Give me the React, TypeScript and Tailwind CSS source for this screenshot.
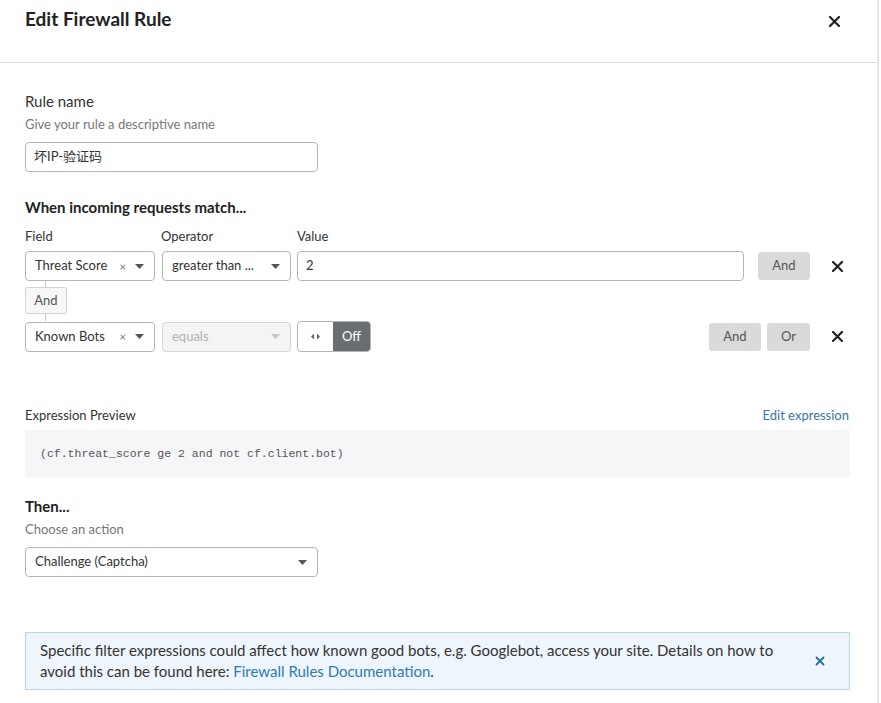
import { X } from "lucide-react";

const font = { fontFamily: '"Lato", "Noto Sans CJK SC", sans-serif' };

const Caret = ({ light }: { light?: boolean }) => (
  <svg width="9" height="5" viewBox="0 0 9 5" className="shrink-0">
    <path d="M0 0h9L4.5 5z" fill={light ? "#c4c4c4" : "#555"} />
  </svg>
);

const Select = ({
  label,
  clear,
  disabled,
  className = "",
}: {
  label: string;
  clear?: boolean;
  disabled?: boolean;
  className?: string;
}) => (
  <div
    className={`flex items-center h-[30px] rounded-[4px] border pl-[9px] pr-[10px] ${
      disabled ? "bg-[#f4f4f4] border-[#d6d6d6] text-[#b0b0b0]" : "bg-white border-[#b5b5b5] text-[#333]"
    } ${className}`}
  >
    <span className="flex-1 truncate text-[13px]">{label}</span>
    {clear && <span className="text-[11px] text-[#777] mr-[9px] leading-none">×</span>}
    <Caret light={disabled} />
  </div>
);

const GrayBtn = ({ children, className = "" }: { children: React.ReactNode; className?: string }) => (
  <button className={`h-[28px] rounded-[3px] bg-[#dadada] text-[13px] text-[#555] ${className}`}>{children}</button>
);

const BoldX = () => (
  <svg width="11" height="11" viewBox="0 0 11 11">
    <path d="M1 1l9 9M10 1l-9 9" stroke="#222" strokeWidth="2.2" strokeLinecap="square" />
  </svg>
);

export default function App() {
  return (
    <div className="w-[879px] min-h-[703px] bg-white border-r-2 border-[#e6e6e6] text-[#333]" style={font}>
      <div className="h-[63px] border-b border-[#dedede] flex justify-between items-start pl-[25px] pr-[37px] pt-[5px]">
        <h1 className="text-[19px] font-bold text-[#222]">Edit Firewall Rule</h1>
        <div className="mt-[11px]">
          <BoldX />
        </div>
      </div>

      <div className="px-[25px] pt-[28px]">
        <div className="text-[15px] leading-[20px]">Rule name</div>
        <div className="text-[13px] leading-[18px] text-[#777] mt-[4px]">Give your rule a descriptive name</div>
        <div className="mt-[9px] w-[293px] h-[30px] rounded-[4px] border border-[#b5b5b5] flex items-center px-[8px] text-[13px]">
          坏IP-验证码
        </div>

        <div className="text-[15px] font-bold mt-[25px] leading-[20px] text-[#222]">When incoming requests match...</div>
        <div className="flex text-[13px] mt-[10px] leading-[18px]">
          <span className="w-[136px]">Field</span>
          <span className="w-[136px]">Operator</span>
          <span>Value</span>
        </div>

        <div className="flex items-center mt-[6px]">
          <Select label="Threat Score" clear className="w-[130px]" />
          <Select label="greater than ..." className="w-[129px] ml-[7px]" />
          <div className="ml-[6px] w-[447px] h-[30px] rounded-[4px] border border-[#b5b5b5] flex items-center px-[8px] text-[13px]">
            2
          </div>
          <GrayBtn className="w-[52px] ml-[14px]">And</GrayBtn>
          <div className="ml-[22px]">
            <BoldX />
          </div>
        </div>

        <div className="flex flex-col items-start">
          <div className="w-px h-[6px] bg-[#c8c8c8] ml-[20px]" />
          <div className="h-[27px] w-[42px] border border-[#d4d4d4] rounded-[2px] bg-[#f7f7f7] text-[13px] text-[#555] flex items-center justify-center">
            And
          </div>
          <div className="w-px h-[7px] bg-[#c8c8c8] ml-[20px]" />
        </div>

        <div className="flex items-center">
          <Select label="Known Bots" clear className="w-[130px]" />
          <Select label="equals" disabled className="w-[129px] ml-[7px]" />
          <div className="ml-[6px] flex h-[31px] w-[74px] rounded-[4px] border border-[#b5b5b5] overflow-hidden">
            <div className="w-[35px] flex items-center justify-center text-[#666]">
              <svg width="9" height="7" viewBox="0 0 9 7">
                <path d="M3 0.5L0 3.5 3 6.5zM6 0.5L9 3.5 6 6.5z" fill="#666" />
              </svg>
            </div>
            <div className="flex-1 bg-[#6b6e71] text-white text-[13px] flex items-center justify-center">Off</div>
          </div>
          <div className="flex-1" />
          <GrayBtn className="w-[52px]">And</GrayBtn>
          <GrayBtn className="w-[43px] ml-[6px]">Or</GrayBtn>
          <div className="ml-[22px] mr-[9px]">
            <BoldX />
          </div>
        </div>

        <div className="flex justify-between items-end mt-[54px] text-[13px] leading-[18px] pr-[3px]">
          <span>Expression Preview</span>
          <span className="text-[#3a76a6]">Edit expression</span>
        </div>
        <div className="mt-[6px] w-[825px] h-[47px] bg-[#f5f6f7] flex items-center pl-[15px]">
          <span className="text-[11.5px] text-[#555]" style={{ fontFamily: '"Liberation Mono", monospace' }}>
            (cf.threat_score ge 2 and not cf.client.bot)
          </span>
        </div>

        <div className="text-[15px] font-bold mt-[19px] leading-[20px] text-[#222]">Then...</div>
        <div className="text-[13px] text-[#777] mt-[4px] leading-[18px]">Choose an action</div>
        <Select label="Challenge (Captcha)" className="w-[293px] mt-[9px]" />

        <div className="mt-[55px] w-[825px] h-[58px] bg-[#eef5fb] border border-[#b9d5ea] flex items-center pl-[14px] pr-[22px]">
          <p className="w-[748px] text-[15px] leading-[21px] text-[#333]">
            Specific filter expressions could affect how known good bots, e.g. Googlebot, access your site. Details on how to
            avoid this can be found here: <span className="text-[#2d7cb5]">Firewall Rules Documentation</span>.
          </p>
          <div className="flex-1" />
          <X size={14} strokeWidth={3.2} color="#2d6fa3" />
        </div>
      </div>
    </div>
  );
}
